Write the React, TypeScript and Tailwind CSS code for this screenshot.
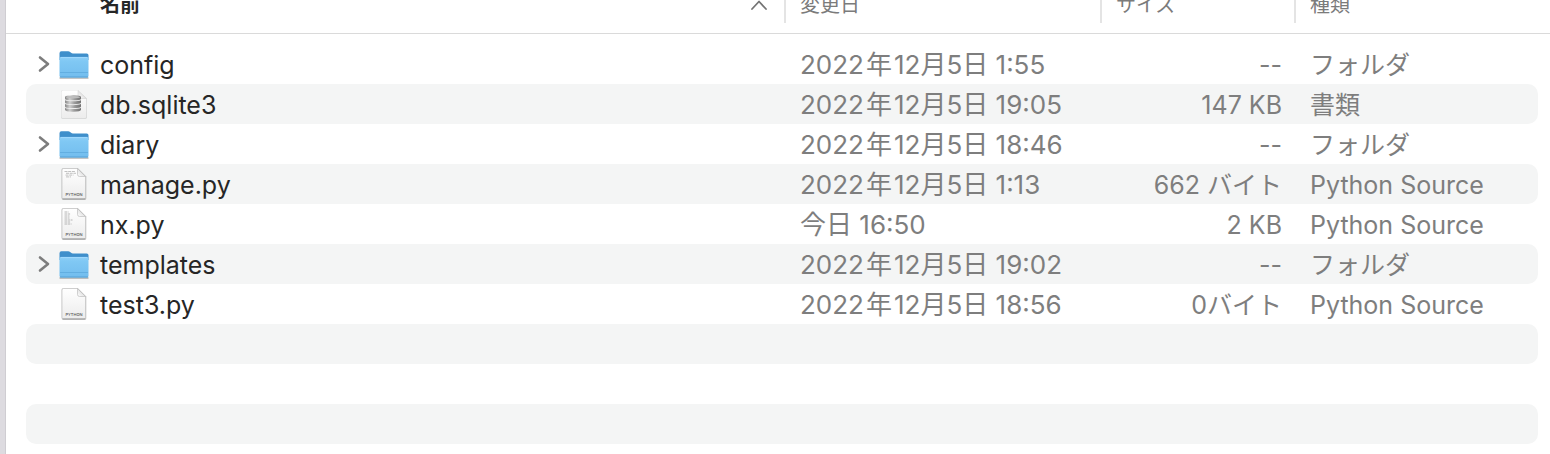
import { clsx } from 'clsx';

type IconKind = 'folder' | 'database' | 'script' | 'list' | 'blank';

interface FileEntry {
  name: string;
  icon: IconKind;
  modified: string;
  size: string;
  kind: string;
}

const files: FileEntry[] = [
  { name: 'config', icon: 'folder', modified: '2022年12月5日 1:55', size: '--', kind: 'フォルダ' },
  { name: 'db.sqlite3', icon: 'database', modified: '2022年12月5日 19:05', size: '147 KB', kind: '書類' },
  { name: 'diary', icon: 'folder', modified: '2022年12月5日 18:46', size: '--', kind: 'フォルダ' },
  { name: 'manage.py', icon: 'script', modified: '2022年12月5日 1:13', size: '662 バイト', kind: 'Python Source' },
  { name: 'nx.py', icon: 'list', modified: '今日 16:50', size: '2 KB', kind: 'Python Source' },
  { name: 'templates', icon: 'folder', modified: '2022年12月5日 19:02', size: '--', kind: 'フォルダ' },
  { name: 'test3.py', icon: 'blank', modified: '2022年12月5日 18:56', size: '0バイト', kind: 'Python Source' },
];

const emptyRows = [7, 8, 9];

const columns = 'grid grid-cols-[minmax(0,1fr)_316px_194px_244px]';

/** Shared gradients for the row icons */
function IconDefs() {
  return (
    <svg className="absolute size-0" aria-hidden="true">
      <defs>
        <linearGradient id="folderFront" x1="0" y1="0" x2="0" y2="1">
          <stop offset="0" stopColor="#8fd0f8" />
          <stop offset="0.2" stopColor="#80c8f4" />
          <stop offset="1" stopColor="#72bdee" />
        </linearGradient>
        <linearGradient id="paper" x1="0" y1="0" x2="0" y2="1">
          <stop offset="0" stopColor="#ffffff" />
          <stop offset="1" stopColor="#ececec" />
        </linearGradient>
        <linearGradient id="metal" x1="0" y1="0" x2="1" y2="0">
          <stop offset="0" stopColor="#858585" />
          <stop offset="0.3" stopColor="#cfcfcf" />
          <stop offset="0.6" stopColor="#9a9a9a" />
          <stop offset="1" stopColor="#707070" />
        </linearGradient>
        <linearGradient id="fold" x1="0" y1="1" x2="1" y2="0">
          <stop offset="0" stopColor="#ffffff" />
          <stop offset="0.5" stopColor="#e4e4e4" />
        </linearGradient>
      </defs>
    </svg>
  );
}

function FolderIcon() {
  return (
    <svg viewBox="0 0 32 32" className="size-8 shrink-0" aria-hidden="true">
      <path d="M2 30h28" stroke="#000" strokeOpacity="0.3" strokeWidth="1.4" strokeLinecap="round" />
      <path
        d="M1.5 5.2Q1.5 3.3 3.4 3.3h6.8q1.1 0 1.9.7l1 .8q.7.6 1.8.6h13.8q1.8 0 1.8 1.8V12h-29z"
        fill="#3f8fcb"
      />
      <path
        d="M1.5 10.6Q1.5 9 3.1 9h25.8q1.6 0 1.6 1.6v17.2q0 1.7-1.7 1.7H3.2q-1.7 0-1.7-1.7z"
        fill="url(#folderFront)"
      />
      <path d="M2.5 9.4h27" stroke="#a6dcff" strokeWidth="0.8" />
      <path d="M2 24.5h28" stroke="#5da9dd" strokeWidth="0.8" />
      <path d="M2 29h28" stroke="#539fd4" strokeWidth="0.9" />
    </svg>
  );
}

function DatabaseIcon() {
  return (
    <svg viewBox="0 0 32 32" className="size-8 shrink-0" aria-hidden="true">
      <path d="M4 2.5h16l9 8V29q0 2-2 2H5q-2 0-2-2V4.500q0-2 1-2z" fill="#000" fillOpacity="0.13" />
      <path d="M5 2.500h15l8.300 8v18q0 1.800-1.800 1.800H5.200q-1.800 0-1.800-1.800V4.100q0-1.600 1.600-1.600z" fill="url(#paper)" />
      <path d="M20 2.500l8.300 8h-6.500q-1.800 0-1.800-1.800z" fill="url(#fold)" stroke="#cccccc" strokeWidth="0.5" />
      <path d="M7 9v12.500q0 2.500 8 2.500t8-2.500V9z" fill="#ededed" />
      <path d="M7 9q0-1.700 8-1.700T23 9v1.700q0 1.600-8 1.600t-8-1.600z" fill="url(#metal)" />
      <path d="M7 12.200q2.300 1.100 8 1.100t8-1.100v2.400q0 1.600-8 1.600t-8-1.600z" fill="url(#metal)" />
      <path d="M7 16.100q2.300 1.100 8 1.100t8-1.100v2.400q0 1.600-8 1.600t-8-1.600z" fill="url(#metal)" />
      <path d="M7 20q2.300 1.100 8 1.100t8-1.100v1.800q0 1.900-8 1.900t-8-1.900z" fill="url(#metal)" />
      <ellipse cx="15" cy="9.200" rx="7" ry="1.300" fill="#bdbdbd" />
    </svg>
  );
}

function PythonIcon({ variant }: { variant: IconKind }) {
  return (
    <svg viewBox="0 0 32 36" className="h-9 w-8 shrink-0" aria-hidden="true">
      <path d="M5 2h15l8.500 8.500V32q0 2-2 2h-21q-2 0-2-2V4q0-2 1.500-2z" fill="#000" fillOpacity="0.14" />
      <path
        d="M5.500 2.500h14l8 8v21q0 1.500-1.500 1.500h-20.500q-1.500 0-1.500-1.500V4q0-1.500 1.500-1.500z"
        fill="url(#paper)"
        stroke="#b9b9b9"
        strokeWidth="0.600"
      />
      <path d="M4.500 33h23" stroke="#8f8f8f" strokeWidth="0.900" />
      {variant === 'script' && (
        <path
          d="M6.500 5.500h11M8 7.300h10M7.500 9.100h8M8 10.900h5"
          stroke="#bababa"
          strokeWidth="0.900"
          strokeDasharray="3 .7"
        />
      )}
      {variant === 'list' && (
        <path
          d="M6.500 6h4M6.500 8h6M6.500 10h5M6.500 12h5M6.500 14h8M6.500 16h6M6.500 18h7"
          stroke="#b5b5b5"
          strokeWidth="1"
          strokeDasharray="2.500 .6"
        />
      )}
      <path d="M19.500 2.500l8 8h-6q-2 0-2-2z" fill="url(#fold)" stroke="#b5b5b5" strokeWidth="0.600" />
      <text x="16" y="29.500" textAnchor="middle" fontSize="4" fontWeight="500" fill="#555555">
        PYTHON
      </text>
    </svg>
  );
}

function FileIcon({ icon }: { icon: IconKind }) {
  if (icon === 'folder') return <FolderIcon />;
  if (icon === 'database') return <DatabaseIcon />;
  return <PythonIcon variant={icon} />;
}

/** Date text with a little air on both sides of the year sign */
function ModifiedDate({ value }: { value: string }) {
  const [year, rest] = value.split('年');
  if (!rest) return <>{value}</>;

  return (
    <>
      {year}
      <span className="mx-0.5">年</span>
      {rest}
    </>
  );
}

function HeaderRow() {
  const cell = 'my-2.5 flex items-center border-l-2 border-[#e4e4e4] pl-3.5 text-left font-normal';

  return (
    <thead className="block border-b border-[#dadada] pl-5 pr-3">
      <tr className={clsx(columns, 'h-14 text-xl text-[#7b7b7b]')}>
        <th scope="col" aria-sort="ascending" className="flex font-semibold text-[#262626]">
          <button type="button" className="flex flex-1 items-center justify-between pl-[74px] pr-4">
            名前
            <svg viewBox="0 0 18 12" className="h-3 w-[18px]" fill="none" aria-hidden="true">
              <path
                d="M2 10l7-7.500L16 10"
                stroke="#747474"
                strokeWidth="1.800"
                strokeLinecap="round"
                strokeLinejoin="round"
              />
            </svg>
          </button>
        </th>
        <th scope="col" className={cell}>変更日</th>
        <th scope="col" className={cell}>サイズ</th>
        <th scope="col" className={cell}>種類</th>
      </tr>
    </thead>
  );
}

function FileRow({ file, striped }: { file: FileEntry; striped: boolean }) {
  return (
    <tr className={clsx(columns, 'h-10 items-center rounded-[10px] text-[#7e7e7e]', striped && 'bg-[#f4f5f5]')}>
      <td className="flex items-center gap-1 pl-2 text-[#262626]">
        {file.icon === 'folder' ? (
          <button type="button" aria-label={file.name} aria-expanded="false" className="flex w-5 justify-center">
            <svg viewBox="0 0 12 18" className="h-[18px] w-3" fill="none" aria-hidden="true">
              <path
                d="M2 2.500l8 6.500-8 6.500"
                stroke="#7d7d7d"
                strokeWidth="2.600"
                strokeLinecap="round"
                strokeLinejoin="round"
              />
            </svg>
          </button>
        ) : (
          <span className="w-5" />
        )}
        <FileIcon icon={file.icon} />
        <span className="truncate pl-1.5 pt-0.5">{file.name}</span>
      </td>
      <td className="pl-4 pt-0.5 text-[26px]">
        <ModifiedDate value={file.modified} />
      </td>
      <td className="pr-3 pt-0.5 text-right">{file.size}</td>
      <td className="pl-4 pt-0.5">{file.kind}</td>
    </tr>
  );
}

export default function App() {
  return (
    <div className="flex h-screen overflow-hidden bg-white font-['Inter','Noto_Sans_CJK_JP',sans-serif]">
      <IconDefs />
      <div className="w-1.5 shrink-0 border-r border-[#cfcdd2] bg-[#dddbe0]" />
      <main className="min-w-0 flex-1">
        <table className="-mt-[23px] block whitespace-nowrap text-[25px] leading-9">
          <HeaderRow />
          <tbody className="block pb-2.5 pl-5 pr-3 pt-2.5">
            {files.map((file, i) => (
              <FileRow key={file.name} file={file} striped={i % 2 === 1} />
            ))}
            {emptyRows.map((i) => (
              <tr key={i} className={clsx('block h-10 rounded-[10px]', i % 2 === 1 && 'bg-[#f4f5f5]')} />
            ))}
          </tbody>
        </table>
      </main>
    </div>
  );
}
